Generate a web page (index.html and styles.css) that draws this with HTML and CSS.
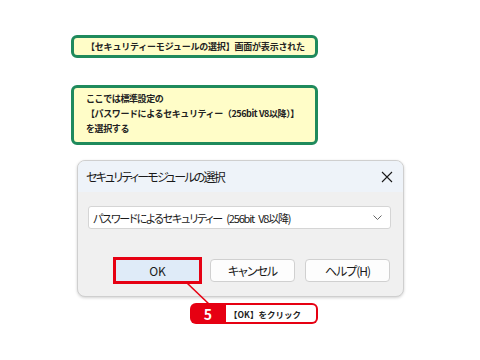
FILE: index.html
```html
<!DOCTYPE html>
<html lang="ja">
<head>
<meta charset="utf-8">
<link rel="stylesheet" href="styles.css">
</head>
<body>
<div class="page">
  <div class="callout callout-one">【セキュリティーモジュールの選択】画面が表示された</div>
  <div class="callout callout-two">ここでは標準設定の<br>【パスワードによるセキュリティー（256bit V8以降）】<br>を選択する</div>

  <div class="dialog">
    <div class="titlebar">
      <span class="title">セキュリティーモジュールの選択</span>
      <svg class="close" width="12" height="12" viewBox="0 0 12 12"><path d="M1 1 L11 11 M11 1 L1 11" stroke="#1a1a1a" stroke-width="1.1" fill="none"/></svg>
    </div>
    <div class="body">
      <div class="select">
        <span>パスワードによるセキュリティー (256bit V8以降)</span>
        <svg class="chev" width="9" height="5" viewBox="0 0 9 5"><path d="M0.5 0.5 L4.5 4.5 L8.5 0.5" stroke="#666" stroke-width="1" fill="none"/></svg>
      </div>
      <div class="buttons">
        <div class="btn btn-ok">OK</div>
        <div class="btn">キャンセル</div>
        <div class="btn">ヘルプ(H)</div>
      </div>
    </div>
  </div>

  <div class="step">
    <div class="step-num">5</div>
    <div class="step-text">【OK】をクリック</div>
  </div>

  <svg class="leader" width="480" height="360" viewBox="0 0 480 360"><line x1="187" y1="283" x2="210" y2="305" stroke="#e60012" stroke-width="1.6"/></svg>
</div>
</body>
</html>
```

FILE: styles.css
```css
html, body {
  margin: 0;
  padding: 0;
  background: #ffffff;
}
.page {
  position: relative;
  width: 480px;
  height: 360px;
  padding-top: 35px;
  box-sizing: border-box;
  font-family: "Noto Sans CJK JP", "Noto Sans", sans-serif;
  color: #1a1a1a;
}
.callout {
  margin-left: 71px;
  width: 247px;
  box-sizing: border-box;
  border: 3px solid #1f8a5c;
  border-radius: 6px;
  background: #fffdc8;
  font-size: 9px;
  font-weight: bold;
  color: #222;
  padding-left: 10px;
  letter-spacing: -0.2px;
}
.callout-one {
  height: 23px;
  line-height: 17px;
  padding-left: 12px;
}
.callout-two {
  margin-top: 27px;
  height: 60px;
  padding-top: 3px;
  line-height: 15px;
  padding-left: 12px;
  letter-spacing: -0.4px;
}
.dialog {
  margin-top: 15px;
  margin-left: 77px;
  width: 327px;
  height: 137px;
  box-sizing: border-box;
  border: 1px solid #cfcfcf;
  border-radius: 8px;
  overflow: hidden;
  background: #f0f0f0;
  box-shadow: 0 1px 3px rgba(0,0,0,0.18);
}
.titlebar {
  height: 31px;
  background: #eef3f9;
  display: flex;
  align-items: center;
  justify-content: space-between;
  padding: 0 10px 0 8px;
}
.title {
  font-size: 12px;
  font-feature-settings: "palt";
  letter-spacing: -1.8px;
  color: #1a1a1a;
}
.close {
  display: block;
}
.body {
  padding: 14px 12px 0 10px;
}
.select {
  height: 23px;
  box-sizing: border-box;
  background: #ffffff;
  border: 1px solid #d5d5d5;
  border-radius: 3px;
  display: flex;
  align-items: center;
  justify-content: space-between;
  padding: 0 8px 0 4px;
  font-size: 11px;
  font-feature-settings: "palt";
  letter-spacing: -1.2px;
  word-spacing: 3px;
}
.chev {
  display: block;
}
.buttons {
  margin-top: 30px;
  display: flex;
  gap: 10px;
  padding-left: 27px;
}
.btn {
  width: 85px;
  height: 23px;
  box-sizing: border-box;
  border: 1px solid #d0d0d0;
  border-radius: 4px;
  background: #fdfdfd;
  display: flex;
  align-items: center;
  justify-content: center;
  font-size: 12px;
  font-feature-settings: "palt";
  letter-spacing: -1px;
}
.btn-ok {
  background: #dfebf8;
  border-color: #dfebf8;
  outline: 3px solid #e60012;
  outline-offset: -1px;
  border-radius: 0;
  letter-spacing: 0;
}
.step {
  margin-top: 6px;
  margin-left: 190px;
  width: 128px;
  height: 21px;
  display: flex;
}
.step-num {
  width: 36px;
  background: #e60012;
  color: #fff;
  border-radius: 6px 0 0 6px;
  font-weight: bold;
  font-size: 14px;
  display: flex;
  align-items: center;
  justify-content: center;
}
.step-text {
  flex: 1;
  box-sizing: border-box;
  border: 2px solid #e60012;
  border-left: none;
  border-radius: 0 6px 6px 0;
  background: #fff;
  font-size: 8.5px;
  font-weight: bold;
  display: flex;
  align-items: center;
  padding-left: 3px;
  color: #222;
}
.leader {
  position: absolute;
  left: 0;
  top: 0;
  pointer-events: none;
}
```
